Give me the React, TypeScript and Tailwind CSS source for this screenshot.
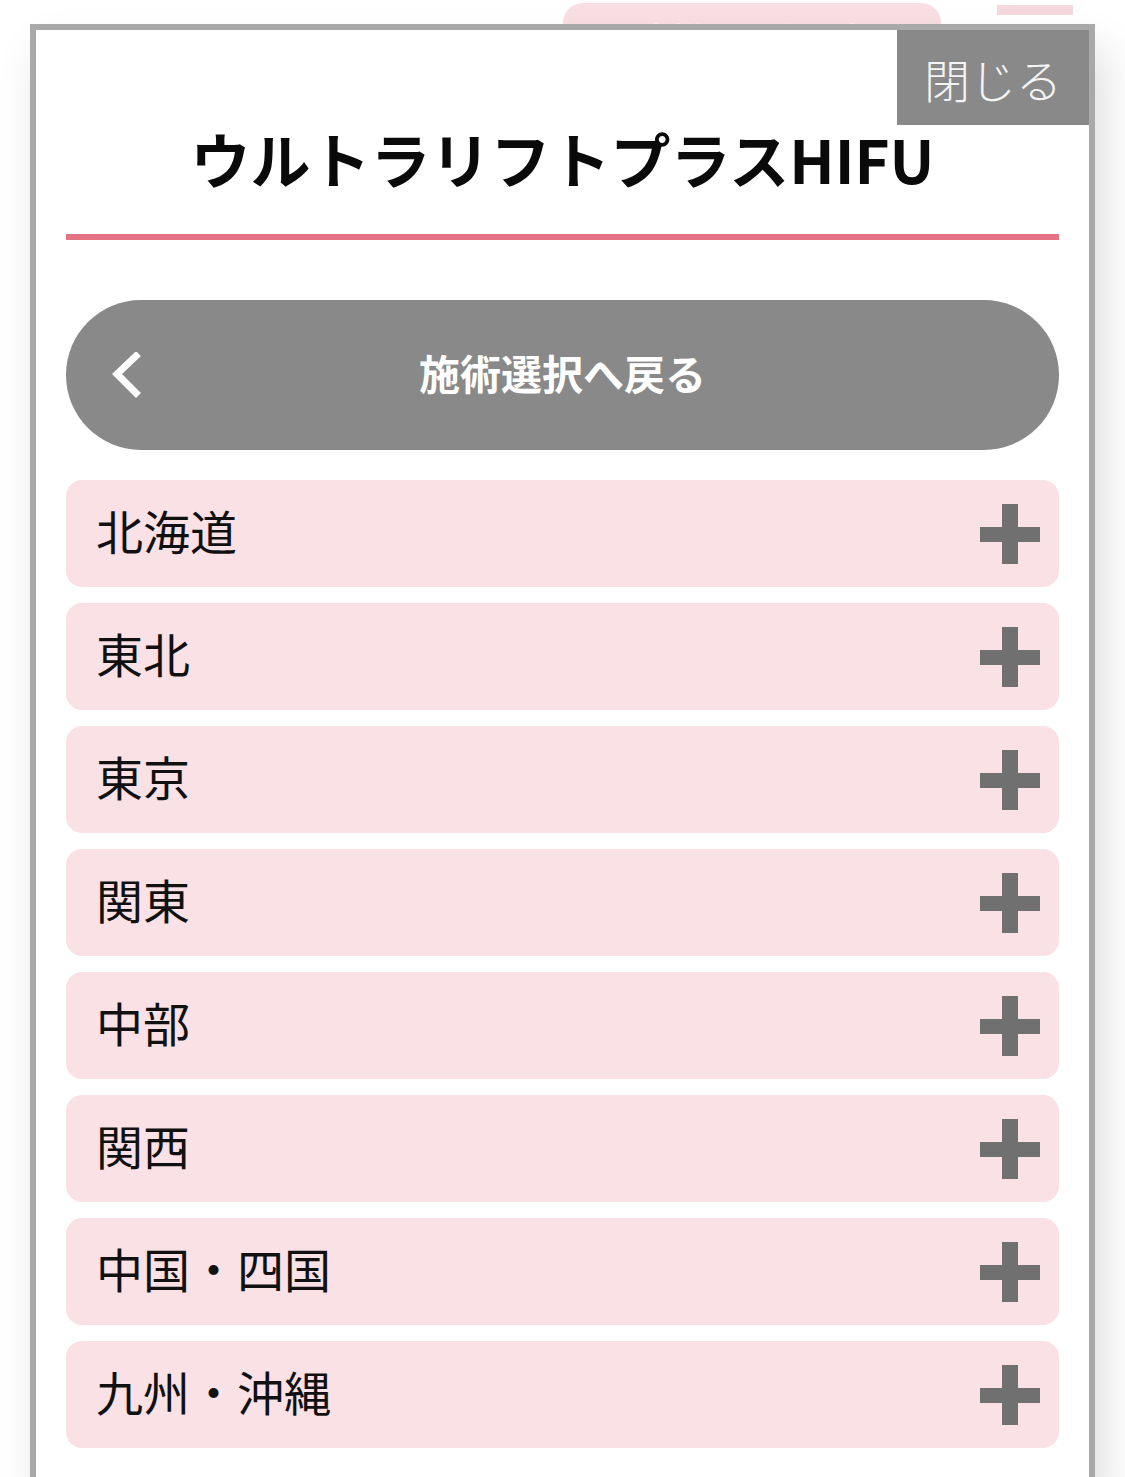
const regions = ["北海道", "東北", "東京", "関東", "中部", "関西", "中国・四国", "九州・沖縄"];

const font = { fontFamily: '"Noto Sans CJK JP", "Noto Sans", sans-serif' };

function PlusIcon() {
  return (
    <svg width="60" height="60" viewBox="0 0 60 60" className="shrink-0">
      <rect x="22" y="0" width="16" height="60" fill="#707070" />
      <rect x="0" y="23" width="60" height="15" fill="#707070" />
    </svg>
  );
}

function ChevronLeft() {
  return (
    <svg width="30" height="46" viewBox="0 0 30 46" className="shrink-0">
      <polyline points="24,4 5,22 24,41" fill="none" stroke="#fff" strokeWidth="7" strokeLinecap="square" />
    </svg>
  );
}

export default function App() {
  return (
    <div className="relative h-[1477px] w-[1125px] overflow-hidden bg-white" style={font}>
      {/* page behind the modal */}
      <div className="flex items-start">
        <div className="ml-[563px] mt-[3px] flex h-[60px] w-[378px] justify-center rounded-[20px] bg-[#f9dfe4] pt-[10px] text-[32px] font-bold text-white/80">
          お客様番号確認済み
        </div>
        <div className="ml-[56px] mt-[5px] h-[10px] w-[76px] bg-[#f6d9de]" />
      </div>

      {/* modal */}
      <div className="absolute left-[30px] top-[24px] w-[1065px] border-[6px] border-b-0 border-[#a9a9a9] bg-white shadow-[10px_24px_40px_rgba(0,0,0,0.13)]">
        <button className="absolute right-0 top-0 flex h-[95px] w-[192px] items-center justify-center bg-[#898989] text-[46px] font-light leading-none text-[#f4f4f4]">
          閉じる
        </button>

        <div className="flex h-[1460px] flex-col px-[30px] pt-[83px]">
          <h1 className="text-center text-[60px] font-bold leading-[90px] text-[#0a0a0a]">ウルトラリフトプラスHIFU</h1>
          <div className="mt-[31px] h-[6px] bg-[#e47384]" />

          <button className="relative mt-[60px] flex h-[150px] items-center justify-center rounded-full bg-[#898989] pb-[6px]">
            <span className="absolute left-[46px] top-[52px]">
              <ChevronLeft />
            </span>
            <span className="text-[41px] font-bold leading-none text-white">施術選択へ戻る</span>
          </button>

          <div className="mt-[30px] flex flex-col gap-[16px]">
            {regions.map((r) => (
              <div
                key={r}
                className="flex h-[107px] items-center justify-between rounded-[16px] bg-[#f9e1e5] pl-[30px] pr-[19px]"
              >
                <span className="pb-[8px] text-[47px] leading-none text-[#111]">{r}</span>
                <PlusIcon />
              </div>
            ))}
          </div>
        </div>
      </div>
    </div>
  );
}
